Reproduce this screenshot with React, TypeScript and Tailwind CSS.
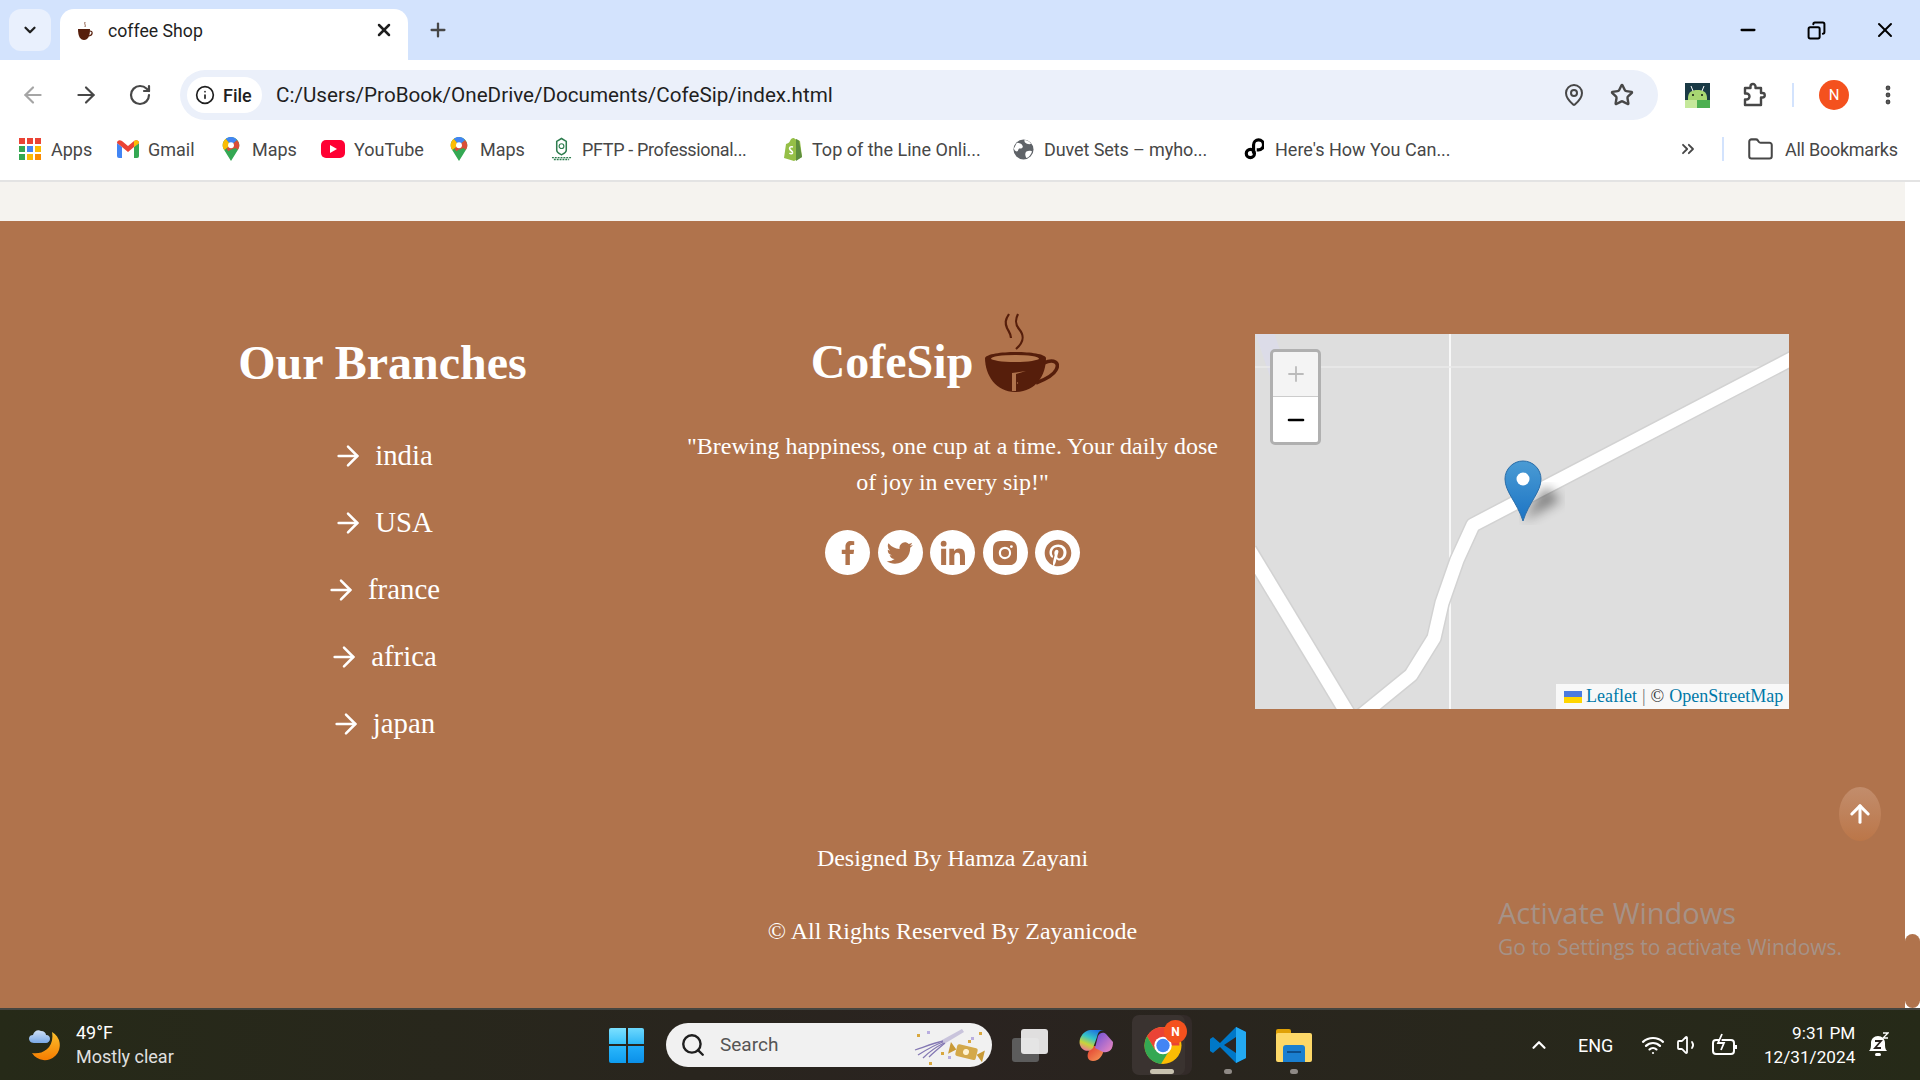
import React from 'react';
import {
  ArrowLeft, ArrowRight, RotateCw, Info, Star, EllipsisVertical, Plus, X, ChevronDown, ChevronUp,
  Minus, ChevronsRight, Folder, Wifi, Volume1, Search, MapPin, ArrowUp, Copy,
} from 'lucide-react';
import { BiLogoFacebook, BiLogoTwitter, BiLogoLinkedin, BiLogoInstagramAlt, BiLogoPinterest } from 'react-icons/bi';

const MapsIcon = () => (
  <svg viewBox="0 0 18 26" className="w-[18px] h-[24px]">
    <path d="M9 0C4 0 0 4 0 9c0 2 .6 3.6 1.6 5L9 26l7.4-12c1-1.4 1.6-3 1.6-5 0-5-4-9-9-9z" fill="#34a853" />
    <path d="M1.6 14 9 9l-5.5-7C1.300 3.500 0 6 0 9c0 2 .6 3.600 1.600 5z" fill="#fbbc04" />
    <path d="M3.500 2 9 9l6.500-5.500C14 1.300 11.700 0 9 0 7 0 5 .7 3.500 2z" fill="#4285f4" />
    <path d="M9 9l-5 3.400 2 3.100c2-1 7.800-6 10.400-1.500 1-1.400 1.600-3 1.600-5 0-2-.9-4-2.500-5.500z" fill="#ea4335" opacity="0.9" />
    <circle cx="9" cy="9" r="3.200" fill="#fff" />
  </svg>
);

const AppsIcon = () => (
  <div className="grid grid-cols-3 gap-[2px] w-[22px]">
    {['bg-[#ea4335]', 'bg-[#ea4335]', 'bg-[#ea4335]', 'bg-[#34a853]', 'bg-[#4285f4]', 'bg-[#fbbc04]', 'bg-[#34a853]', 'bg-[#fbbc04]', 'bg-[#fb8c00]'].map((c, i) => (
      <div key={i} className={`h-[6px] ${c}`} />
    ))}
  </div>
);

const GmailIcon = () => (
  <svg viewBox="0 0 22 18" className="w-[22px] h-[18px]">
    <path d="M0 3v13a2 2 0 0 0 2 2h3V7z" fill="#4285f4" />
    <path d="M22 3v13a2 2 0 0 1-2 2h-3V7z" fill="#34a853" />
    <path d="M5 7 0 3c0-3 3-3.500 5-2l6 5 6-5c2-1.500 5-1 5 2l-5 4-6 5z" fill="#ea4335" />
    <path d="M17 7l5-4c0-3-3-3.500-5-2z" fill="#fbbc04" />
  </svg>
);

const YoutubeIcon = () => (
  <div className="w-[24px] h-[18px] rounded-[5px] bg-[#ff0033] flex items-center justify-center">
    <div className="w-0 h-0 border-y-[4px] border-y-transparent border-l-[7px] border-l-white" />
  </div>
);

const PftpIcon = () => (
  <svg viewBox="0 0 22 24" className="w-[21px] h-[24px]">
    <path d="M11 1 16 4v9c0 3-3 4-5 5-2-1-5-2-5-5V4z" fill="none" stroke="#2e7d4f" strokeWidth="1.600" />
    <circle cx="11" cy="9" r="2.500" fill="none" stroke="#2e7d4f" strokeWidth="1.200" />
    <path d="M1 21h20M3 23h16" stroke="#2e7d4f" strokeWidth="1.500" strokeDasharray="2 1" />
  </svg>
);

const ShopifyIcon = () => (
  <svg viewBox="0 0 20 24" className="w-[20px] h-[24px]">
    <path d="M2 21 4 7c2-1 3-1 4-3 1-3 4-4 5-2l3 1 2 1 2 16-8 4z" fill="#95bf47" />
    <path d="M14 2l2 1 1 1 3 16-6 4z" fill="#5e8e3e" />
    <path d="M11 10c-3-1-4 1-3 2.500 1 1.500 3 1.500 2.500 3.500-.4 1-2 1-3 0" fill="none" stroke="#fff" strokeWidth="1.600" />
  </svg>
);

const GlobeIcon = () => (
  <svg viewBox="0 0 22 22" className="w-[21px] h-[21px]">
    <circle cx="11" cy="11" r="10.500" fill="#5f6368" />
    <path d="M4 4c3 0 5 1 6 3s-1 3-3 3-1 3-3 3-3-2-3-3zM14 13c2-1 5-1 6 0-1 3-3 6-6 7-1-2-2-5 0-7zM12 1c2 0 5 1 7 4-2 1-5 0-6-1s-1-2-1-3z" fill="#fff" />
  </svg>
);

const PicsartIcon = () => (
  <svg viewBox="0 0 22 24" className="w-[20px] h-[24px]">
    <circle cx="7" cy="17" r="4.500" fill="none" stroke="#000" strokeWidth="3.500" />
    <path d="M10.500 17V7.500a5.500 5.500 0 1 1 5.500 5.500h-2" fill="none" stroke="#000" strokeWidth="3.500" />
  </svg>
);

const bookmarks = [
  { label: 'Apps', icon: <AppsIcon />, box: 'ml-[19px] w-[22px]', text: 'ml-[10px] w-[40px]' },
  { label: 'Gmail', icon: <GmailIcon />, box: 'ml-[26px] w-[22px]', text: 'ml-[9px] w-[46px]' },
  { label: 'Maps', icon: <MapsIcon />, box: 'ml-[28px] w-[18px]', text: 'ml-[12px] w-[43px]' },
  { label: 'YouTube', icon: <YoutubeIcon />, box: 'ml-[26px] w-[24px]', text: 'ml-[9px] w-[68px]' },
  { label: 'Maps', icon: <MapsIcon />, box: 'ml-[28px] w-[18px]', text: 'ml-[12px] w-[43px]' },
  { label: 'PFTP - Professional...', icon: <PftpIcon />, box: 'ml-[28px] w-[21px]', text: 'ml-[10px] w-[164px] tracking-[-0.35px]' },
  { label: 'Top of the Line Onli...', icon: <ShopifyIcon />, box: 'ml-[36px] w-[20px]', text: 'ml-[10px] w-[170px]' },
  { label: 'Duvet Sets – myho...', icon: <GlobeIcon />, box: 'ml-[31px] w-[21px]', text: 'ml-[10px] w-[162px] tracking-[-0.1px]' },
  { label: "Here's How You Can...", icon: <PicsartIcon />, box: 'ml-[38px] w-[20px]', text: 'ml-[11px] w-[173px]' },
];

const branches = ['india', 'USA', 'france', 'africa', 'japan'];

const socials = [BiLogoFacebook, BiLogoTwitter, BiLogoLinkedin, BiLogoInstagramAlt, BiLogoPinterest];

const CupLogo = () => (
  <svg viewBox="0 0 75 80" className="w-[75px] h-[80px]">
    <path d="M25 1C21 7 21 10 23 15 25 19 27 21 27 25" fill="none" stroke="#561e0b" strokeWidth="2.200" />
    <path d="M34 1C31 7 31 11 35 16 40 22 41 28 32 36" fill="none" stroke="#561e0b" strokeWidth="2.200" />
    <path d="M1 45C4 37 60 37 62 45 62 62 52 79 31 79 12 79 1 62 1 45z" fill="#561e0b" />
    <ellipse cx="31" cy="45.500" rx="24" ry="3.500" fill="#b5794f" />
    <path d="M60 50C70 45 76 50 72 57 69 63 60 67 52 70" fill="none" stroke="#561e0b" strokeWidth="3.500" />
    <path d="M28 60 42 58 32 61V78H28z" fill="#b0734c" />
    <circle cx="33.500" cy="70" r="0.700" fill="#b0734c" />
  </svg>
);

// leaflet map, coordinates are px inside the 534x375 box
const MapTiles = () => (
  <svg viewBox="0 0 534 375" className="absolute inset-0 w-full h-full">
    <defs>
      <filter id="blur"><feGaussianBlur stdDeviation="6" /></filter>
      <linearGradient id="pin" x1="0" y1="0" x2="0" y2="1">
        <stop offset="0" stopColor="#4a9bd4" />
        <stop offset="1" stopColor="#1c74c4" />
      </linearGradient>
    </defs>
    <path d="M8 -6 27 50" stroke="#dcdce8" strokeWidth="18" fill="none" />
    <line x1="195" y1="0" x2="195" y2="375" stroke="#f8f8f8" strokeWidth="2" />
    <line x1="0" y1="33" x2="534" y2="33" stroke="#eaeaea" strokeWidth="1.500" />
    <g fill="none" strokeLinejoin="round">
      <path d="M540 23 218 191 202 226 187 269 179 304 156 341 102 385" stroke="#d2d2d2" strokeWidth="16" />
      <path d="M-6 216 96 385" stroke="#d2d2d2" strokeWidth="17" />
      <path d="M540 23 218 191 202 226 187 269 179 304 156 341 102 385" stroke="#fff" strokeWidth="13" />
      <path d="M-6 216 96 385" stroke="#fff" strokeWidth="14" />
    </g>
    <path d="M268 187 306 166 290 152z" fill="#000" opacity="0.42" filter="url(#blur)" />
    <path d="M268 187C262 168 250 158 250 145a18 18 0 0 1 36 0C286 158 274 168 268 187z" fill="url(#pin)" stroke="#2a6da8" strokeWidth="1" />
    <circle cx="268" cy="145" r="6.500" fill="#fff" />
  </svg>
);

const Weather = () => (
  <svg viewBox="0 0 35 33" className="w-[35px] h-[33px]">
    <defs>
      <linearGradient id="moon" x1="0" y1="0" x2="0" y2="1"><stop offset="0" stopColor="#fbc02d" /><stop offset="1" stopColor="#f57c00" /></linearGradient>
      <linearGradient id="cloud" x1="0" y1="0" x2="0" y2="1"><stop offset="0" stopColor="#cfe0f8" /><stop offset="1" stopColor="#7aa9e6" /></linearGradient>
    </defs>
    <path d="M23 3A15 15 0 1 1 3 24C12 26 26 20 23 3z" fill="url(#moon)" />
    <path d="M5 14C1 14 0 11 0 9.500 0 7 2 6 4 6 5 2 9 0 12 2c3 0 5 2 5 4 3 0 4 2 4 4s-2 4-4 4z" fill="url(#cloud)" />
  </svg>
);

const StartLogo = () => (
  <div className="grid grid-cols-2 gap-[2px] w-[35px] h-[35px]">
    <div className="bg-gradient-to-b from-[#7be0ff] to-[#35c3fb] rounded-tl-[2px]" />
    <div className="bg-gradient-to-b from-[#6bd8fd] to-[#29b6f6] rounded-tr-[2px]" />
    <div className="bg-gradient-to-b from-[#2bb8fb] to-[#0d9df0] rounded-bl-[2px]" />
    <div className="bg-gradient-to-b from-[#1eaaf8] to-[#0b8fe8] rounded-br-[2px]" />
  </div>
);

const Cracker = () => (
  <svg viewBox="0 0 76 44" className="w-[76px] h-[44px]">
    <path d="M48 6 28 17l2 4 20-12z" fill="#c9c4dc" />
    <g stroke="#8478b4" strokeWidth="1.300" fill="none">
      <path d="M29 18C20 20 10 24 1 27" />
      <path d="M29 19C20 22 12 27 4 32" />
      <path d="M30 20C22 24 14 30 9 35" />
      <path d="M31 20C25 25 19 30 15 34" />
    </g>
    <g transform="rotate(14 52 29)">
      <rect x="42" y="23" width="21" height="12" rx="2" fill="#d4a94a" />
      <path d="M42 29 35 23v12zM63 29l7-6v12z" fill="#c99a36" />
      <circle cx="52" cy="29" r="3" fill="#fff3d0" />
    </g>
    <g fill="#d9a83f">
      <rect x="3" y="11" width="3" height="3" />
      <rect x="27" y="29" width="3" height="3" />
      <rect x="15" y="39" width="3" height="3" />
      <rect x="65" y="9" width="3" height="3" />
      <rect x="54" y="17" width="3" height="3" />
    </g>
    <g fill="#b9aee0">
      <rect x="13" y="8" width="3" height="3" />
      <rect x="34" y="33" width="3" height="3" />
      <rect x="57" y="14" width="3" height="3" />
    </g>
  </svg>
);

const TaskView = () => (
  <div className="relative w-[36px] h-[33px]">
    <div className="absolute left-0 bottom-0 w-[27px] h-[24px] bg-[#5c5c5c] rounded-[3px]" />
    <div className="absolute right-0 top-0 w-[27px] h-[25px] bg-[#f4f4f4]/90 rounded-[3px]" />
  </div>
);

const Copilot = () => (
  <svg viewBox="0 0 34 31" className="w-[34px] h-[31px]">
    <defs>
      <linearGradient id="cp1" x1="0.7" y1="0" x2="0.2" y2="1"><stop offset="0" stopColor="#1f6fe0" /><stop offset="0.4" stopColor="#35c5c8" /><stop offset="0.7" stopColor="#c8d43a" /><stop offset="1" stopColor="#f070a0" /></linearGradient>
      <linearGradient id="cp2" x1="0" y1="0" x2="1" y2="1"><stop offset="0" stopColor="#6a4fd8" /><stop offset="1" stopColor="#f08ac0" /></linearGradient>
      <linearGradient id="cp3" x1="0" y1="0" x2="1" y2="1"><stop offset="0" stopColor="#e0382e" /><stop offset="1" stopColor="#f9a35c" /></linearGradient>
    </defs>
    <path d="M12 16H26C24 26 20 31 14 31 9 31 7 26 10 21z" fill="url(#cp3)" />
    <path d="M19 6C21 2 25 2 27 4L34 12C34 20 30 23 24 22L16 18z" fill="url(#cp2)" />
    <path d="M11 0H25C20 0 19 3 18 7L14 18C10 23 3 21 1 15-1 9 4 1 11 0z" fill="url(#cp1)" />
  </svg>
);

const ChromeLogo = () => (
  <svg viewBox="0 0 36 36" className="w-[38px] h-[37px]">
    <circle cx="18" cy="18" r="18" fill="#fbbc04" />
    <path d="M18 0A18 18 0 0 0 2.400 9L10 22l8-4h16A18 18 0 0 0 18 0z" fill="#ea4335" />
    <path d="M2.400 9A18 18 0 0 0 16 36l8-13-14-1z" fill="#34a853" />
    <circle cx="18" cy="18" r="8.500" fill="#fff" />
    <circle cx="18" cy="18" r="6.500" fill="#4285f4" />
  </svg>
);

const VsCode = () => (
  <svg viewBox="0 0 36 36" className="w-[36px] h-[36px]">
    <path d="M26 0 36 5v26l-10 5L10 20 3 26l-3-2v-12l3-2 7 6z" fill="#0078c8" />
    <path d="M26 0 36 5v26l-10 5z" fill="#23a9f2" />
    <path d="M26 10 14 18l12 8z" fill="#2b2624" />
  </svg>
);

const FolderApp = () => (
  <div className="relative w-[36px] h-[33px]">
    <div className="absolute left-0 top-0 w-[15px] h-[8px] bg-[#e0a106] rounded-t-[2px]" />
    <div className="absolute left-0 right-0 top-[4px] bottom-0 bg-[#fdd868] rounded-[2px]" />
    <div className="absolute left-[7px] right-[7px] bottom-0 h-[17px] bg-[#1a7fd0] rounded-t-[3px] flex justify-center pt-[6px]">
      <div className="w-[14px] h-[2px] bg-[#0d4f8c]" />
    </div>
  </div>
);

const App: React.FC = () => {
  return (
    <div className="w-[1920px] h-[1080px] overflow-hidden flex flex-col font-['Roboto',sans-serif]">
      {/* tab strip */}
      <div className="h-[60px] bg-[#d3e3fd] flex items-start relative shrink-0">
        <div className="ml-[9px] mt-[9px] w-[42px] h-[42px] rounded-[12px] bg-[#e9f0fd] flex items-center justify-center">
          <ChevronDown className="w-[18px] h-[18px] text-[#1f1f1f]" strokeWidth={3} />
        </div>
        <div className="relative ml-[9px] mt-[9px] w-[348px] h-[51px] bg-white rounded-t-[14px] flex items-center pl-[17px] z-10">
          <svg viewBox="0 0 16 20" className="w-[16px] h-[20px] -mt-[6px]">
            <path d="M8 0c-1 2 1 3 0 5" stroke="#8a5a44" strokeWidth="1" fill="none" />
            <path d="M1 7h12c0 7-2 11-6 11S1 14 1 7z" fill="#561e0b" />
            <path d="M13 9c3 0 3 4-1 5" stroke="#561e0b" strokeWidth="1.200" fill="none" />
          </svg>
          <span className="ml-[15px] text-[17.700px] text-[#1f1f1f] mb-[6px]">coffee Shop</span>
          <X className="absolute right-[14px] top-[11px] w-[20px] h-[20px] text-[#1f1f1f]" strokeWidth={3} />
        </div>
        <Plus className="ml-[19px] mt-[19px] w-[22px] h-[22px] text-[#474747]" strokeWidth={2.5} />
        <div className="ml-auto flex items-center mt-[18px] text-black">
          <Minus className="w-[22px] h-[22px]" strokeWidth={2.5} />
          <Copy className="ml-[48px] w-[19px] h-[19px] -scale-x-100" strokeWidth={2.5} />
          <X className="ml-[47px] mr-[23px] w-[24px] h-[24px]" strokeWidth={2} />
        </div>
      </div>

      {/* toolbar */}
      <div className="h-[70px] bg-white rounded-t-[14px] flex items-center shrink-0">
        <ArrowLeft className="ml-[20px] w-[26px] h-[26px] text-[#a5a5a5]" strokeWidth={2} />
        <ArrowRight className="ml-[27px] w-[26px] h-[26px] text-[#474747]" strokeWidth={2} />
        <RotateCw className="ml-[29px] w-[24px] h-[24px] text-[#474747]" strokeWidth={2.2} />
        <div className="ml-[28px] w-[1478px] h-[50px] rounded-full bg-[#ebf0fa] flex items-center relative">
          <div className="ml-[7px] w-[75px] h-[36px] rounded-full bg-white flex items-center pl-[8px]">
            <Info className="w-[20px] h-[20px] text-[#1f1f1f]" strokeWidth={2} />
            <span className="ml-[8px] text-[18px] font-medium text-[#1f1f1f]">File</span>
          </div>
          <span className="ml-[14px] text-[20.650px] text-[#1f1f1f]">C:/Users/ProBook/OneDrive/Documents/CofeSip/index.html</span>
          <MapPin className="absolute left-[1382px] top-[12px] w-[24px] h-[26px] text-[#474747]" strokeWidth={2} />
          <Star className="absolute left-[1430px] top-[13px] w-[24px] h-[24px] text-[#474747]" strokeWidth={2.4} />
        </div>
        <svg viewBox="0 0 25 25" className="ml-[27px] w-[25px] h-[25px]">
          <rect width="25" height="25" fill="#1a3a45" />
          <rect y="17" width="25" height="8" fill="#c5e89b" />
          <rect x="12" y="17" width="13" height="8" fill="#4caf50" />
          <path d="M3 15c0-6 4-8 9.500-8S22 9 22 15v2H3z" fill="#a8d672" />
          <circle cx="8" cy="12" r="1" fill="#111" />
          <circle cx="17" cy="12" r="1" fill="#111" />
          <path d="M6 3l2 5M19 3l-2 5" stroke="#fff" strokeWidth="1" />
        </svg>
        <svg viewBox="0 0 26 26" className="ml-[30px] w-[26px] h-[26px]" fill="none" stroke="#474747" strokeWidth="2.400" strokeLinejoin="round">
          <path d="M5 6h5.500V4.500a2.500 2.500 0 0 1 5 0V6H21v5h1.500a2.200 2.200 0 0 1 0 4.500H21V23H5v-5.500h1.500a3 3 0 0 0 0-6H5z" />
        </svg>
        <div className="ml-[26px] w-[2px] h-[24px] bg-[#d3e3fd]" />
        <div className="ml-[25px] w-[30px] h-[30px] rounded-full bg-[#f4511e] flex items-center justify-center text-white text-[15px]">N</div>
        <EllipsisVertical className="ml-[27px] w-[24px] h-[24px] text-[#474747]" strokeWidth={2.8} />
      </div>

      {/* bookmarks bar */}
      <div className="h-[52px] bg-white border-b-2 border-[#e3e3e3] flex items-center shrink-0 text-[18px] text-[#474747] pb-[12px]">
        {bookmarks.map((b, i) => (
          <React.Fragment key={i}>
            <div className={`${b.box} flex items-center justify-center shrink-0`}>{b.icon}</div>
            <span className={`${b.text} shrink-0 whitespace-nowrap`}>{b.label}</span>
          </React.Fragment>
        ))}
        <ChevronsRight className="ml-[230px] w-[20px] h-[20px] text-[#474747]" strokeWidth={2.2} />
        <div className="ml-[24px] w-[2px] h-[24px] bg-[#d3e3fd]" />
        <Folder className="ml-[23px] w-[27px] h-[27px] text-[#474747]" strokeWidth={1.800} />
        <span className="ml-[11px] whitespace-nowrap tracking-[-0.25px]">All Bookmarks</span>
      </div>

      {/* page */}
      <div className="flex-1 flex min-h-0 relative">
        <div className="flex-1 flex flex-col min-w-0">
          <div className="h-[39px] bg-[#f5f3ef] shrink-0" />
          <footer className="flex-1 bg-[#b0734c] text-white font-['Liberation_Serif',serif] flex flex-col items-center">
            <div className="w-[1710px] grid grid-cols-3">
              <div className="flex flex-col items-center pt-[114px]">
                <h2 className="text-[48px] leading-[55px] font-bold">Our Branches</h2>
                <ul className="mt-[32px] mb-[2px] flex flex-col items-center">
                  {branches.map(b => (
                    <li key={b} className="h-[67px] flex items-center text-[28.800px]">
                      <ArrowRight className="w-[32px] h-[32px]" strokeWidth={1.900} />
                      <span className="ml-[11px]">{b}</span>
                    </li>
                  ))}
                </ul>
              </div>
              <div className="flex flex-col items-center pt-[92px]">
                <div className="flex items-start">
                  <span className="mt-[21px] text-[48px] leading-[55px] font-bold">CofeSip</span>
                  <div className="ml-[11px] mr-[35px]"><CupLogo /></div>
                </div>
                <p className="mt-[35px] w-[540px] text-center text-[24px] leading-[36px]">
                  "Brewing happiness, one cup at a time. Your daily dose of joy in every sip!"
                </p>
                <div className="mt-[30px] flex gap-[7.500px]">
                  {socials.map((Icon, i) => (
                    <div key={i} className="w-[45px] h-[45px] rounded-full bg-white flex items-center justify-center text-[#b0734c]">
                      <Icon size={32} />
                    </div>
                  ))}
                </div>
              </div>
              <div className="flex justify-center pt-[113px] pr-[1px]">
                <div className="relative w-[534px] h-[375px] bg-[#dedede] overflow-hidden">
                  <MapTiles />
                  <div className="absolute left-[15px] top-[15px] w-[51px] border-[3px] border-[#b0b0b0] rounded-[5px] overflow-hidden font-['Liberation_Sans',sans-serif]">
                    <div className="h-[45px] bg-[#f4f4f4] border-b border-[#ccc] flex items-center justify-center">
                      <Plus className="w-[24px] h-[24px] text-[#bbb]" strokeWidth={1.800} />
                    </div>
                    <div className="h-[45px] bg-white flex items-center justify-center">
                      <Minus className="w-[24px] h-[24px] text-black" strokeWidth={2.600} />
                    </div>
                  </div>
                  <div className="absolute right-0 bottom-0 h-[25px] w-[233px] bg-white/80 flex items-center pl-[8px] text-[18px] text-[#333] whitespace-nowrap">
                    <div className="w-[18px] h-[12px] flex flex-col mr-[4px]">
                      <div className="flex-1 bg-[#4c7be0]" />
                      <div className="flex-1 bg-[#ffd500]" />
                    </div>
                    <span className="text-[#0078a8]">Leaflet</span>
                    <span className="mx-[5px] text-[#777]">|</span>
                    <span>©</span>
                    <span className="ml-[5px] text-[#0078a8]">OpenStreetMap</span>
                  </div>
                </div>
              </div>
            </div>
            <p className="mt-[81px] text-[24px] leading-[36px]">Designed By Hamza Zayani</p>
            <p className="mt-[37px] text-[24px] leading-[36px]">© All Rights Reserved By Zayanicode</p>
          </footer>
        </div>

        {/* scrollbar */}
        <div className="w-[15px] bg-white flex flex-col justify-end shrink-0">
          <div className="h-[74px] bg-[#b0734c] rounded-[8px]" />
        </div>

        {/* back to top */}
        <div className="absolute left-[1839px] top-[605px] w-[42px] h-[54px] rounded-[50%] bg-gradient-to-b from-[#c28d6c] to-[#bb7648] flex items-center justify-center">
          <ArrowUp className="w-[28px] h-[28px] text-white" strokeWidth={2.600} />
        </div>

        {/* watermark */}
        <div className="absolute left-[1498px] top-[712px] font-['Open_Sans',sans-serif] text-[#a69287] pointer-events-none whitespace-nowrap">
          <div className="text-[29px] leading-[38px]">Activate Windows</div>
          <div className="text-[21px] leading-[30px]">Go to Settings to activate Windows.</div>
        </div>
      </div>

      {/* taskbar */}
      <div className="h-[72px] shrink-0 border-t-2 border-[#454540] bg-gradient-to-r from-[#262a18] via-[#2a2320] to-[#262a18] flex items-center text-white">
        <div className="ml-[29px]"><Weather /></div>
        <div className="ml-[12px] w-[97px] text-[18px] leading-[24px] whitespace-nowrap">
          <div>49°F</div>
          <div className="text-[#e0e0e0]">Mostly clear</div>
        </div>
        <div className="ml-[436px]"><StartLogo /></div>
        <div className="ml-[22px] w-[326px] h-[44px] rounded-full bg-[#f1f1f1] flex items-center text-[#555] relative">
          <Search className="ml-[14px] w-[26px] h-[26px] text-[#1f1f1f]" strokeWidth={2.2} />
          <span className="ml-[14px] text-[19px]">Search</span>
          <div className="absolute right-[2px] top-0"><Cracker /></div>
        </div>
        <div className="ml-[20px]"><TaskView /></div>
        <div className="ml-[31px]"><Copilot /></div>
        <div className="ml-[19px] w-[60px] h-[60px] relative flex items-center justify-center">
          <div className="absolute right-0 top-0 bottom-0 w-[20px] rounded-r-[8px] bg-[#332b29]" />
          <div className="absolute left-0 top-0 bottom-0 w-[53px] rounded-[7px] bg-[#3a3330]" />
          <div className="absolute left-[12px] top-[12px]"><ChromeLogo /></div>
          <div className="absolute left-[32px] top-[5px] w-[23px] h-[23px] rounded-full bg-[#f4511e] text-[12px] font-bold flex items-center justify-center">N</div>
          <div className="absolute left-[18px] bottom-[1px] w-[24px] h-[5px] rounded-full bg-[#c8c2b0]" />
        </div>
        <div className="ml-[18px] relative">
          <VsCode />
          <div className="absolute left-[14px] -bottom-[11px] w-[8px] h-[5px] rounded-full bg-[#8f8a86]" />
        </div>
        <div className="ml-[30px] relative">
          <FolderApp />
          <div className="absolute left-[14px] -bottom-[12px] w-[8px] h-[5px] rounded-full bg-[#8f8a86]" />
        </div>
        <ChevronUp className="ml-[216px] w-[22px] h-[22px]" strokeWidth={2.4} />
        <span className="ml-[28px] text-[18px]">ENG</span>
        <Wifi className="ml-[28px] w-[24px] h-[24px]" strokeWidth={2.2} />
        <Volume1 className="ml-[11px] w-[24px] h-[24px]" strokeWidth={1.800} />
        <svg viewBox="0 0 26 24" className="ml-[12px] w-[26px] h-[24px]" fill="none" stroke="#fff" strokeWidth="2">
          <rect x="1" y="7" width="21" height="14" rx="3" />
          <path d="M24 12v4" />
          <path d="M10 1 6 10h6l-3 7" strokeWidth="1.800" fill="#2a2320" />
        </svg>
        <div className="ml-[17px] w-[100px] text-right text-[17.200px] leading-[24px] whitespace-nowrap">
          <div>9:31 PM</div>
          <div>12/31/2024</div>
        </div>
        <svg viewBox="0 0 22 26" className="ml-[12px] w-[22px] h-[26px]">
          <path d="M2 19c2-2 2-4 2-8s3-7 7-7 7 3 7 7 0 6 2 8z" fill="#fff" />
          <rect x="8" y="21" width="6" height="3" rx="1.500" fill="#fff" />
          <path d="M8 9h6l-6 7h6" stroke="#2a2320" strokeWidth="1.800" fill="none" />
          <path d="M16 1h5l-5 5h5" stroke="#fff" strokeWidth="1.300" fill="none" />
        </svg>
      </div>
    </div>
  );
};

export default App;
